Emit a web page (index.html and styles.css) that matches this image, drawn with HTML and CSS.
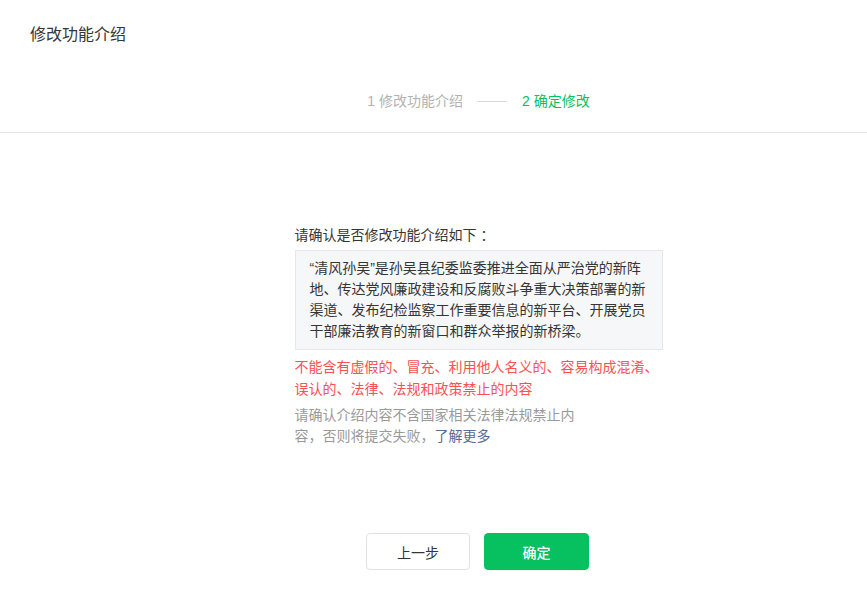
FILE: index.html
```html
<!DOCTYPE html>
<html lang="zh-CN">
<head>
<meta charset="utf-8">
<title>修改功能介绍</title>
<link rel="stylesheet" href="styles.css">
</head>
<body>
<div class="page">
  <header class="header">
    <div class="title">修改功能介绍</div>
    <div class="steps">
      <span class="step done">1 修改功能介绍</span>
      <span class="step-line"></span>
      <span class="step current">2 确定修改</span>
    </div>
  </header>
  <main class="main">
    <div class="column">
      <div class="confirm-title">请确认是否修改功能介绍如下<span class="punct">：</span></div>
      <div class="intro-box">“清风孙吴”是孙吴县纪委监委推进全面从严治党的新阵地、传达党风廉政建设和反腐败斗争重大决策部署的新渠道、发布纪检监察工作重要信息的新平台、开展党员干部廉洁教育的新窗口和群众举报的新桥梁。</div>
      <p class="warn">不能含有虚假的、冒充、利用他人名义的、容易构成混淆、误认的、法律、法规和政策禁止的内容</p>
      <p class="tips">请确认介绍内容不含国家相关法律法规禁止内容，否则将提交失败，<a class="link" href="#">了解更多</a></p>
    </div>
    <div class="actions">
      <button class="btn btn-default">上一步</button>
      <button class="btn btn-primary">确定</button>
    </div>
  </main>
</div>
</body>
</html>
```

FILE: styles.css
```css
* { box-sizing: border-box; }
html, body { margin: 0; padding: 0; background: #fff; }
body {
  font-family: "Liberation Sans", "Noto Sans CJK SC", sans-serif;
  font-size: 14px;
  color: #353535;
  text-spacing-trim: space-all;
}
.page { width: 867px; min-height: 594px; }
.header { border-bottom: 1px solid #e7e7e7; }
.title {
  height: 70px;
  line-height: 70px;
  padding-left: 30px;
  font-size: 16px;
  color: #353535;
}
.steps {
  display: flex;
  justify-content: center;
  align-items: center;
  padding: 21px 0 21px 90px;
  line-height: 20px;
}
.step { font-size: 14px; white-space: nowrap; }
.step.done { color: #b2b2b2; }
.step.current { color: #07c160; }
.step-line {
  width: 30px;
  height: 1px;
  background: #d9d9d9;
  margin: 0 15px 0 14px;
}
.main {
  padding: 92px 0 0 90px;
  display: flex;
  flex-direction: column;
  align-items: center;
}
.column { width: 368px; }
.confirm-title { line-height: 20px; margin-bottom: 5px; color: #353535; }
.punct {
  display: inline-block;
  width: 14px;
  padding-left: 4px;
}
.intro-box {
  background: #f6f7f9;
  border: 1px solid #e5e7ec;
  padding: 7px 14px;
  line-height: 21px;
  color: #353535;
}
.warn {
  margin: 6px 0 0;
  line-height: 22px;
  color: #fa5151;
}
.tips {
  margin: 5px 0 0;
  width: 286px;
  line-height: 21px;
  color: #9a9a9a;
}
.link { color: #576b95; text-decoration: none; }
.actions {
  display: flex;
  gap: 14px;
  margin-top: 86px;
  margin-left: -2px;
}
.btn {
  width: 104px;
  height: 37px;
  border-radius: 4px;
  font-family: inherit;
  font-size: 14px;
  cursor: pointer;
}
.btn-default {
  background: #fff;
  border: 1px solid #e2e2e2;
  color: #353535;
}
.btn-primary {
  width: 105px;
  background: #07c160;
  border: 1px solid #07c160;
  color: #fff;
  font-weight: 500;
}
```
